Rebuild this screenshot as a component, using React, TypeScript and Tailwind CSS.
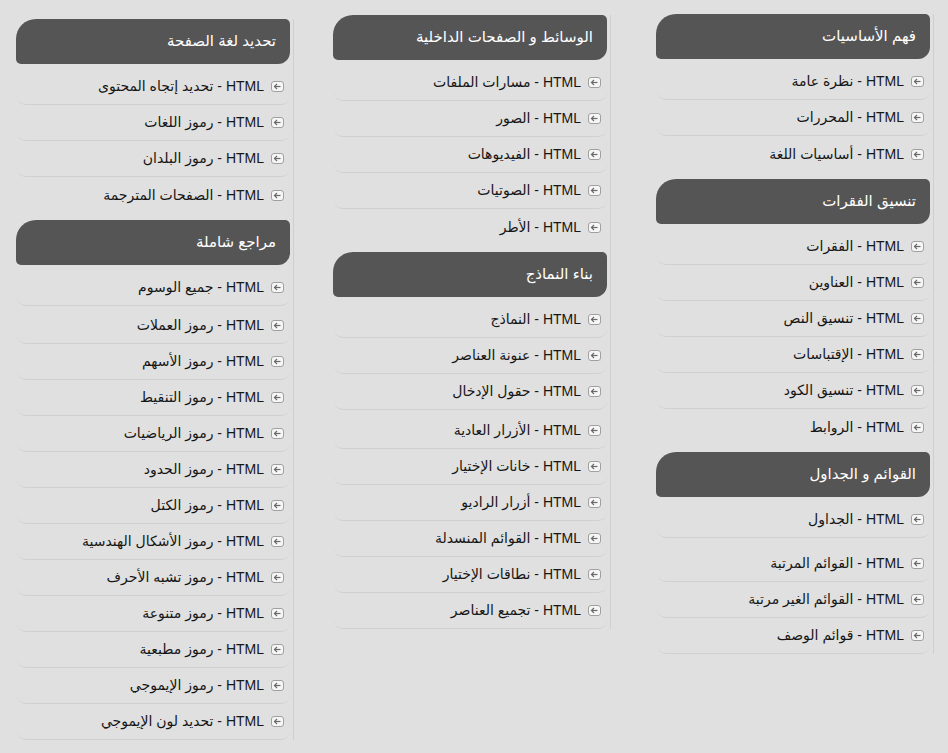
import React from "react";

type Item = { t: string; extra?: number };
type Section = { title: string; items: Item[] };

const col1: Section[] = [
  {
    title: "فهم الأساسيات",
    items: [{ t: "نظرة عامة" }, { t: "المحررات" }, { t: "أساسيات اللغة" }],
  },
  {
    title: "تنسيق الفقرات",
    items: [
      { t: "الفقرات" },
      { t: "العناوين" },
      { t: "تنسيق النص" },
      { t: "الإقتباسات" },
      { t: "تنسيق الكود" },
      { t: "الروابط" },
    ],
  },
  {
    title: "القوائم و الجداول",
    items: [
      { t: "الجداول" },
      { t: "القوائم المرتبة", extra: 8 },
      { t: "القوائم الغير مرتبة" },
      { t: "قوائم الوصف" },
    ],
  },
];

const col2: Section[] = [
  {
    title: "الوسائط و الصفحات الداخلية",
    items: [
      { t: "مسارات الملفات" },
      { t: "الصور" },
      { t: "الفيديوهات" },
      { t: "الصوتيات" },
      { t: "الأطر" },
    ],
  },
  {
    title: "بناء النماذج",
    items: [
      { t: "النماذج" },
      { t: "عنونة العناصر" },
      { t: "حقول الإدخال" },
      { t: "الأزرار العادية", extra: 3 },
      { t: "خانات الإختيار" },
      { t: "أزرار الراديو" },
      { t: "القوائم المنسدلة" },
      { t: "نطاقات الإختيار" },
      { t: "تجميع العناصر" },
    ],
  },
];

const col3: Section[] = [
  {
    title: "تحديد لغة الصفحة",
    items: [
      { t: "تحديد إتجاه المحتوى" },
      { t: "رموز اللغات" },
      { t: "رموز البلدان" },
      { t: "الصفحات المترجمة" },
    ],
  },
  {
    title: "مراجع شاملة",
    items: [
      { t: "جميع الوسوم" },
      { t: "رموز العملات", extra: 2 },
      { t: "رموز الأسهم" },
      { t: "رموز التنقيط" },
      { t: "رموز الرياضيات" },
      { t: "رموز الحدود" },
      { t: "رموز الكتل" },
      { t: "رموز الأشكال الهندسية" },
      { t: "رموز تشبه الأحرف" },
      { t: "رموز متنوعة" },
      { t: "رموز مطبعية" },
      { t: "رموز الإيموجي" },
      { t: "تحديد لون الإيموجي" },
    ],
  },
];

function ArrowIcon() {
  return (
    <svg width="13" height="11" viewBox="0 0 13 11" className="shrink-0">
      <rect x="0.5" y="0.5" width="12" height="10" rx="2.5" fill="#f6f6f6" stroke="#a0a0a0" />
      <path d="M3.5 5.5 H9.5" stroke="#6a6a6a" strokeWidth="1.2" />
      <path d="M6 3 L3.5 5.5 L6 8" stroke="#6a6a6a" strokeWidth="1.2" fill="none" />
    </svg>
  );
}

function Column({ sections, className }: { sections: Section[]; className: string }) {
  return (
    <div className={"w-[278px] shrink-0 pr-[3px] border-r border-[#cfcfcf] " + className}>
      {sections.map((s, si) => {
        const lastSection = si === sections.length - 1;
        return (
          <div key={si} className={si > 0 ? "mt-[7px]" : ""}>
            <div className="h-[45px] w-[274px] bg-[#555555] text-white text-[15px] flex items-center pr-[14px] rounded-tl-[20px] rounded-tr-[5px] rounded-br-[12px] rounded-bl-[5px]">
              {s.title}
            </div>
            <div className="mt-[5px]">
              {s.items.map((it, ii) => {
                const last = ii === s.items.length - 1;
                const border = !last || lastSection ? "border-b border-[#d0d0d0]" : "";
                return (
                  <div
                    key={ii}
                    className={
                      "w-[273px] flex items-center gap-[7px] pr-[6px] text-[14px] text-[#161616] rounded-[9px] " +
                      border
                    }
                    style={{ height: 36 + (it.extra ?? 0), paddingTop: it.extra ?? 0 }}
                  >
                    <ArrowIcon />
                    <span className="whitespace-nowrap">{"HTML - " + it.t}</span>
                  </div>
                );
              })}
            </div>
          </div>
        );
      })}
    </div>
  );
}

export default function App() {
  return (
    <div
      dir="rtl"
      className="w-[948px] h-[753px] overflow-hidden bg-[#e0e0e0] font-['Liberation_Sans','DejaVu_Sans',sans-serif]"
    >
      <div className="flex items-start pr-[14px]">
        <Column sections={col1} className="mt-[14px]" />
        <Column sections={col2} className="mt-[15px] mr-[45px]" />
        <Column sections={col3} className="mt-[19px] mr-[39px]" />
      </div>
    </div>
  );
}
